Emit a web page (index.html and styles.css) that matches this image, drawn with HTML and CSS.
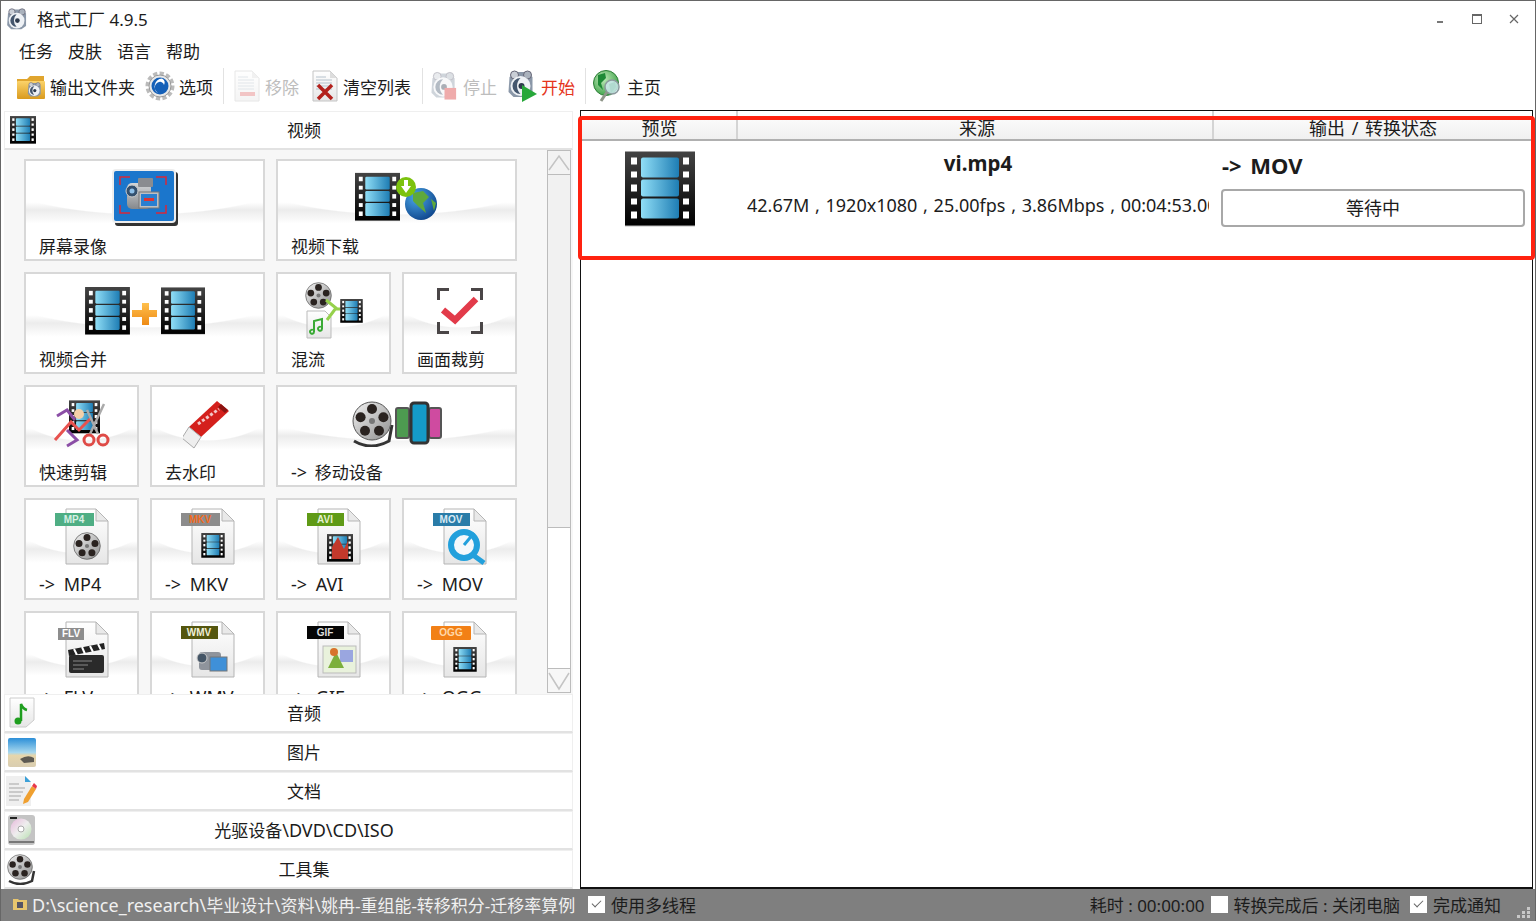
FILE: index.html
```html
<!DOCTYPE html>
<html lang="zh-CN">
  <head>
    <meta charset="utf-8">
    <title>格式工厂 4.9.5</title>
    <link rel="stylesheet" href="styles.css">
  </head>
  <body>
    <!-- shared icon parts -->
    <svg class="defs" width="0" height="0">
      <defs>
        <linearGradient id="gFilm" x1="0" y1="0" x2="0" y2="1"><stop offset="0" stop-color="#444"/><stop offset="1" stop-color="#000"/></linearGradient>
        <linearGradient id="gPane" x1="0" y1="0" x2="1" y2="0"><stop offset="0" stop-color="#90def6"/><stop offset="1" stop-color="#1e7db4"/></linearGradient>
        <linearGradient id="gPage" x1="0" y1="0" x2="0" y2="1"><stop offset="0" stop-color="#fff"/><stop offset="1" stop-color="#e6e6e6"/></linearGradient>
        <linearGradient id="gReel" x1="0" y1="0" x2="1" y2="1"><stop offset="0" stop-color="#f2f2f2"/><stop offset="1" stop-color="#8f8f8f"/></linearGradient>
        <linearGradient id="gFolder" x1="0" y1="0" x2="0" y2="1"><stop offset="0" stop-color="#fbd36a"/><stop offset="1" stop-color="#d99a1e"/></linearGradient>
        <linearGradient id="gPlus" x1="0" y1="0" x2="0" y2="1"><stop offset="0" stop-color="#ffc04d"/><stop offset="1" stop-color="#ee8a14"/></linearGradient>
        <linearGradient id="gCam" x1="0" y1="0" x2="0" y2="1"><stop offset="0" stop-color="#d4d6d8"/><stop offset="1" stop-color="#85888c"/></linearGradient>
        <radialGradient id="gGlobe" cx=".35" cy=".3" r=".8"><stop offset="0" stop-color="#4aa6e8"/><stop offset="1" stop-color="#0b3f86"/></radialGradient>
        <radialGradient id="gHome" cx=".4" cy=".35" r=".75"><stop offset="0" stop-color="#bfeab8"/><stop offset="1" stop-color="#2f9a3c"/></radialGradient>
        <linearGradient id="gSky" x1="0" y1="0" x2="0" y2="1"><stop offset="0" stop-color="#2c8fd8"/><stop offset=".5" stop-color="#a8d8ee"/><stop offset=".6" stop-color="#e6d6ac"/><stop offset="1" stop-color="#d9cdb0"/></linearGradient>
        <linearGradient id="gDisc" x1="0" y1="0" x2="1" y2="1"><stop offset="0" stop-color="#e8b8dc"/><stop offset=".5" stop-color="#eeeeee"/><stop offset="1" stop-color="#b8e0b0"/></linearGradient>

        <symbol id="film" viewBox="0 0 70 75">
          <rect y="1" width="70" height="74" fill="#bbb"/>
          <rect width="70" height="74" fill="url(#gFilm)"/>
          <g fill="#fff">
            <rect x="6" y="6" width="6" height="7"/><rect x="6" y="20" width="6" height="6"/><rect x="6" y="33" width="6" height="7"/><rect x="6" y="47" width="6" height="6"/><rect x="6" y="60" width="6" height="7"/>
            <rect x="58" y="6" width="6" height="7"/><rect x="58" y="20" width="6" height="6"/><rect x="58" y="33" width="6" height="7"/><rect x="58" y="47" width="6" height="6"/><rect x="58" y="60" width="6" height="7"/>
          </g>
          <g fill="url(#gPane)">
            <rect x="16" y="6" width="38" height="20" rx="2"/><rect x="16" y="28" width="38" height="17" rx="2"/><rect x="16" y="47" width="38" height="20" rx="2"/>
          </g>
        </symbol>

        <symbol id="reel" viewBox="0 0 40 40">
          <circle cx="20" cy="20" r="19" fill="url(#gReel)" stroke="#555"/>
          <g fill="#2a2320">
            <circle cx="20" cy="8" r="5"/><circle cx="31.4" cy="16.3" r="5"/><circle cx="27" cy="29.7" r="5"/><circle cx="13" cy="29.7" r="5"/><circle cx="8.6" cy="16.3" r="5"/>
          </g>
          <circle cx="20" cy="20" r="3" fill="#777"/>
        </symbol>

        <symbol id="app" viewBox="2 1 27 28">
          <path d="M4 8 L11 3 H21 L27 8 V24 L21 28 H8 L3 23 Z" fill="#8a97a8"/>
          <circle cx="9" cy="6" r="4" fill="#c9ced6" stroke="#667"/>
          <circle cx="22" cy="6" r="4" fill="#aab2bd" stroke="#667"/>
          <circle cx="15" cy="17" r="10" fill="#eef1f5"/>
          <path d="M15 9 A8 8 0 0 0 15 25 A11 11 0 0 1 15 9 Z" fill="#44566e"/>
          <circle cx="16" cy="17" r="3" fill="#2d3a4d"/>
        </symbol>

        <symbol id="page" viewBox="0 0 60 60">
          <path d="M14 2 H44 L56 14 V57 H14 Z" fill="url(#gPage)" stroke="#b5b5b5"/>
          <path d="M44 2 V14 H56 Z" fill="#e9e9e9" stroke="#b5b5b5"/>
        </symbol>

        <symbol id="lines" viewBox="0 0 26 32">
          <path d="M1 1 H18 L25 8 V31 H1 Z" fill="url(#gPage)" stroke="#c4c4c4"/>
          <path d="M18 1 V8 H25 Z" fill="#ddd"/>
          <path d="M4 7 H14 M4 10 H20 M4 13 H20 M4 16 H20 M4 19 H20" stroke="#b6c2cc"/>
        </symbol>
      </defs>
    </svg>

    <div class="window">
      <div class="titlebar">
        <svg class="title-icon" width="22" height="22"><use href="#app"/></svg>
        <span class="title-text">格式工厂 4.9.5</span>
        <div class="win-btns">
          <svg width="12" height="12" viewBox="0 0 12 12"><rect x="3" y="8" width="6" height="2" fill="#777"/></svg>
          <svg width="12" height="12" viewBox="0 0 12 12"><rect x="1.500" y="1.500" width="9" height="9" fill="none" stroke="#666"/><rect x="1" y="1" width="10" height="2" fill="#666"/></svg>
          <svg width="12" height="12" viewBox="0 0 12 12"><path d="M2 2 L10 10 M10 2 L2 10" stroke="#666" stroke-width="1.200"/></svg>
        </div>
      </div>

      <div class="menubar">
        <span>任务</span><span>皮肤</span><span>语言</span><span>帮助</span>
      </div>

      <div class="toolbar">
        <div class="tool">
          <svg width="30" height="30" viewBox="0 0 30 30">
            <path d="M1 8 H11 L14 5 H28 V27 H1 Z" fill="#e0a52e"/>
            <rect x="1" y="10" width="28" height="18" rx="1" fill="url(#gFolder)"/>
            <use href="#app" x="11" y="11" width="15" height="15"/>
          </svg>
          <span>输出文件夹</span>
        </div>
        <div class="tool">
          <svg width="30" height="32" viewBox="0 0 30 32">
            <circle cx="15" cy="16" r="12" fill="none" stroke="#bbb" stroke-width="5" stroke-dasharray="4 2.200"/>
            <circle cx="15" cy="16" r="11" fill="#e8e8e8" stroke="#999"/>
            <circle cx="15" cy="16" r="8.500" fill="#1560b8"/>
            <path d="M17 8.500 A8 8 0 0 0 13 23 A6 6 0 0 1 14 12 A4 4 0 0 1 19 15 A5 5 0 0 0 17 8.500 Z" fill="#fff"/>
          </svg>
          <span>选项</span>
        </div>
        <i class="sep"></i>
        <div class="tool tool-off tool-doc">
          <svg width="27" height="32" viewBox="0 0 27 32">
            <use href="#lines" x="0" y="0" width="26" height="32"/>
            <rect x="6" y="22" width="15" height="4" fill="#e07070"/>
          </svg>
          <span>移除</span>
        </div>
        <div class="tool tool-doc">
          <svg width="27" height="32" viewBox="0 0 27 32">
            <use href="#lines" x="0" y="0" width="26" height="32"/>
            <path d="M6 15 L20 29 M20 15 L6 29" stroke="#b3211c" stroke-width="3.500"/>
          </svg>
          <span>清空列表</span>
        </div>
        <i class="sep"></i>
        <div class="tool tool-off tool-stop">
          <svg width="29" height="30" viewBox="0 0 30 30">
            <use href="#app" x="0" y="0" width="28" height="28"/>
            <rect x="15" y="17" width="12" height="12" fill="#d83030"/>
          </svg>
          <span>停止</span>
        </div>
        <div class="tool tool-start">
          <svg width="30" height="32" viewBox="0 0 30 32">
            <use href="#app" x="0" y="0" width="28" height="28"/>
            <path d="M15 15 L30 24 L15 32 Z" fill="#27a83a"/>
          </svg>
          <span>开始</span>
        </div>
        <i class="sep"></i>
        <div class="tool tool-home">
          <svg width="33" height="32" viewBox="0 0 33 32">
            <circle cx="14" cy="13" r="12.500" fill="url(#gHome)" stroke="#2b7d35"/>
            <path d="M6 5 L13 3 L14 8 L9 13 L11 20 L6 15 Z M17 14 L23 12 L24 17 L19 23 Z" fill="#1e8a36"/>
            <circle cx="20" cy="17" r="7" fill="#d5ecf6" fill-opacity=".8" stroke="#8c9a9e" stroke-width="1.500"/>
            <path d="M15 22 L9 31" stroke="#8f9689" stroke-width="3"/>
          </svg>
          <span>主页</span>
        </div>
      </div>

      <div class="main">
        <div class="left">
          <div class="acc acc-top">
            <div class="acc-icon"><svg width="26" height="28"><use href="#film"/></svg></div>
            <span class="acc-label">视频</span>
          </div>

          <div class="scroller">
            <div class="tiles">
              <div class="tile wide">
                <div class="tile-icon">
                  <svg width="66" height="58" viewBox="0 0 66 58">
                    <rect x="3" y="3" width="63" height="54" rx="3" fill="#333"/>
                    <rect x="1" y="1" width="62" height="52" rx="3" fill="#1b76cc" stroke="#eee" stroke-width="2"/>
                    <path d="M8 16 V8 H18 M44 8 H54 V16 M8 36 V44 H18 M44 44 H54 V36" fill="none" stroke="#d8283a" stroke-width="1.500"/>
                    <rect x="15" y="14" width="24" height="26" rx="5" fill="url(#gCam)"/>
                    <rect x="26" y="9" width="15" height="9" rx="1" fill="#8a8c90"/>
                    <circle cx="20" cy="22" r="6" fill="#34506e" stroke="#ccc"/>
                    <circle cx="20" cy="22" r="2.500" fill="#8fc0e8"/>
                    <rect x="27" y="23" width="20" height="16" fill="#bcbfc3" stroke="#777"/>
                    <rect x="29" y="25" width="16" height="12" fill="#2a7fd0"/>
                    <rect x="32" y="29" width="10" height="3" fill="#d33"/>
                  </svg>
                </div>
                <span class="tile-label">屏幕录像</span>
              </div>
              <div class="tile wide">
                <div class="tile-icon">
                  <svg width="84" height="54" viewBox="0 0 84 54">
                    <use href="#film" x="0" y="1" width="45" height="50"/>
                    <circle cx="66" cy="33" r="16" fill="url(#gGlobe)"/>
                    <path d="M58 22 L68 20 L74 26 L68 32 L71 42 L64 36 L58 30 Z M76 28 L81 32 L79 40 Z" fill="#5ea83c"/>
                    <circle cx="51" cy="16" r="10" fill="#7cc20e"/>
                    <path d="M49 9 H53 V15 H56 L51 22 L46 15 H49 Z" fill="#fff"/>
                  </svg>
                </div>
                <span class="tile-label">视频下载</span>
              </div>

              <div class="tile wide">
                <div class="tile-icon">
                  <svg width="120" height="48" viewBox="0 0 120 48">
                    <use href="#film" x="0" y="0" width="45" height="48"/>
                    <use href="#film" x="76" y="0" width="44" height="48"/>
                    <path d="M57 16 H64 V23 H72 V30 H64 V38 H57 V30 H47 V23 H57 Z" fill="url(#gPlus)"/>
                  </svg>
                </div>
                <span class="tile-label">视频合并</span>
              </div>
              <div class="tile">
                <div class="tile-icon">
                  <svg width="58" height="58" viewBox="0 0 58 58">
                    <use href="#reel" x="0" y="0" width="27" height="27"/>
                    <path d="M2 29 H20 L26 35 V56 H2 Z" fill="url(#gPage)" stroke="#bbb"/>
                    <path d="M9 50 V39 L17 37 V47 M9 50 a2 2 0 1 1 -1 -2 M17 47 a2 2 0 1 1 -1 -2" fill="none" stroke="#3aaa35" stroke-width="2"/>
                    <path d="M21 18 L31 26 L22 38 M30 27 H36" fill="none" stroke="#96d14c" stroke-width="3"/>
                    <use href="#film" x="35" y="17" width="23" height="24"/>
                  </svg>
                </div>
                <span class="tile-label">混流</span>
              </div>
              <div class="tile">
                <div class="tile-icon">
                  <svg width="46" height="46" viewBox="0 0 46 46">
                    <path d="M1.500 12 V1.500 H12 M34 1.500 H44.500 V12 M1.500 34 V44.500 H12 M34 44.500 H44.500 V34" fill="none" stroke="#4a4647" stroke-width="3"/>
                    <path d="M6 22 L18 32 L39 11" fill="none" stroke="#e23b4a" stroke-width="6.500"/>
                  </svg>
                </div>
                <span class="tile-label">画面裁剪</span>
              </div>

              <div class="tile">
                <div class="tile-icon">
                  <svg width="58" height="48" viewBox="0 0 58 48">
                    <use href="#film" x="16" y="0" width="31" height="34"/>
                    <circle cx="26" cy="14" r="5" fill="#f5cfa8"/>
                    <path d="M4 16 L14 10 L22 20 M14 30 L24 40 L14 46" fill="none" stroke="#8b4ea6" stroke-width="3"/>
                    <path d="M2 40 L18 22 L26 30 L38 18" fill="none" stroke="#e8524f" stroke-width="3"/>
                    <path d="M51 4 L37 34 M34 10 L45 34" stroke="#aaa" stroke-width="2.500"/>
                    <circle cx="36" cy="40" r="5" fill="none" stroke="#df4b47" stroke-width="3"/>
                    <circle cx="50" cy="40" r="5" fill="none" stroke="#df4b47" stroke-width="3"/>
                  </svg>
                </div>
                <span class="tile-label">快速剪辑</span>
              </div>
              <div class="tile">
                <div class="tile-icon">
                  <svg width="50" height="50" viewBox="2 0 50 50">
                    <path d="M36 2 L48 12 L20 38 L8 28 Z" fill="#d4201c"/>
                    <path d="M40 5 L47 11 L44 14 L37 8 Z" fill="#8c1210"/>
                    <path d="M17 25 L38 10" stroke="#f3c8c8" stroke-width="3" stroke-dasharray="3 2"/>
                    <path d="M8 28 L20 38 L13 49 L1 39 Z" fill="#eee" stroke="#aaa"/>
                  </svg>
                </div>
                <span class="tile-label">去水印</span>
              </div>
              <div class="tile wide">
                <div class="tile-icon">
                  <svg width="92" height="46" viewBox="0 0 92 46">
                    <path d="M3 40 Q20 50 38 40 L41 24" fill="none" stroke="#333" stroke-width="3"/>
                    <use href="#reel" x="1" y="0" width="40" height="40"/>
                    <rect x="45" y="7" width="13" height="30" rx="2" fill="#4d9a50" stroke="#555" stroke-width="2"/>
                    <rect x="78" y="7" width="12" height="30" rx="2" fill="#cf4ba0" stroke="#555" stroke-width="2"/>
                    <rect x="60" y="2" width="17" height="40" rx="3" fill="#159bc8" stroke="#333" stroke-width="3"/>
                  </svg>
                </div>
                <span class="tile-label"><span class="latin">-&gt; </span>移动设备</span>
              </div>

              <div class="tile">
                <div class="tile-icon">
                  <svg class="tag" width="60" height="60" viewBox="0 0 60 60">
                    <use href="#page" width="60" height="60"/>
                    <use href="#reel" x="21" y="25" width="28" height="28"/>
                    <rect x="3" y="6" width="39" height="13" fill="#4fae84"/>
                    <text x="22" y="16" fill="#d8f0e4">MP4</text>
                  </svg>
                </div>
                <span class="tile-label latin">-&gt; MP4</span>
              </div>
              <div class="tile">
                <div class="tile-icon">
                  <svg class="tag" width="60" height="60" viewBox="0 0 60 60">
                    <use href="#page" width="60" height="60"/>
                    <use href="#film" x="23" y="26" width="24" height="25"/>
                    <rect x="3" y="6" width="39" height="13" fill="#8c8c8c"/>
                    <text x="22" y="16" fill="#f26a1c">MKV</text>
                  </svg>
                </div>
                <span class="tile-label latin">-&gt; MKV</span>
              </div>
              <div class="tile">
                <div class="tile-icon">
                  <svg class="tag" width="60" height="60" viewBox="0 0 60 60">
                    <use href="#page" width="60" height="60"/>
                    <use href="#film" x="23" y="26" width="26" height="30"/>
                    <path d="M28 40 L34 30 L40 42 L44 34 L44 52 L28 52 Z" fill="#c2392c"/>
                    <rect x="3" y="6" width="37" height="13" fill="#5f9a16"/>
                    <text x="21" y="16" fill="#e4f0d0">AVI</text>
                  </svg>
                </div>
                <span class="tile-label latin">-&gt; AVI</span>
              </div>
              <div class="tile">
                <div class="tile-icon">
                  <svg class="tag" width="60" height="60" viewBox="0 0 60 60">
                    <use href="#page" width="60" height="60"/>
                    <circle cx="34" cy="38" r="13" fill="#f4f8fb" stroke="#22a0dc" stroke-width="6"/>
                    <path d="M43 48 L54 56" stroke="#22a0dc" stroke-width="5"/>
                    <path d="M34 38 L44 26" stroke="#22a0dc" stroke-width="3"/>
                    <rect x="3" y="6" width="37" height="13" fill="#2a7ca8"/>
                    <text x="21" y="16" fill="#d8eaf4">MOV</text>
                  </svg>
                </div>
                <span class="tile-label latin">-&gt; MOV</span>
              </div>

              <div class="tile">
                <div class="tile-icon">
                  <svg class="tag" width="60" height="60" viewBox="0 0 60 60">
                    <use href="#page" width="60" height="60"/>
                    <path d="M16 30 L52 23 L53 29 L17 36 Z" fill="#222"/>
                    <path d="M22 29 L25 35 M30 27 L33 34 M38 26 L41 32 M46 24 L49 30" stroke="#fff" stroke-width="2"/>
                    <rect x="17" y="35" width="35" height="18" rx="2" fill="#2a2a2a"/>
                    <path d="M21 41 H40 M21 45 H36 M21 49 H32" stroke="#888"/>
                    <rect x="6" y="8" width="26" height="12" fill="#8d8d8d"/>
                    <text x="19" y="17" fill="#fff">FLV</text>
                  </svg>
                </div>
                <span class="tile-label latin">-&gt; FLV</span>
              </div>
              <div class="tile">
                <div class="tile-icon">
                  <svg class="tag" width="60" height="60" viewBox="0 0 60 60">
                    <use href="#page" width="60" height="60"/>
                    <rect x="21" y="32" width="22" height="18" rx="3" fill="#8f949c"/>
                    <circle cx="24" cy="38" r="5" fill="#456" stroke="#ccc"/>
                    <rect x="32" y="37" width="17" height="14" fill="#3f90d8" stroke="#777"/>
                    <rect x="3" y="6" width="37" height="13" fill="#54560e"/>
                    <text x="21" y="16" fill="#f0f0d8">WMV</text>
                  </svg>
                </div>
                <span class="tile-label latin">-&gt; WMV</span>
              </div>
              <div class="tile">
                <div class="tile-icon">
                  <svg class="tag" width="60" height="60" viewBox="0 0 60 60">
                    <use href="#page" width="60" height="60"/>
                    <rect x="19" y="26" width="33" height="27" fill="#e9f2dc" stroke="#bbb"/>
                    <rect x="36" y="30" width="13" height="12" fill="#9aa6e0"/>
                    <path d="M24 48 L32 32 L40 48 Z" fill="#7caf3c"/>
                    <circle cx="30" cy="32" r="4" fill="#d8742c"/>
                    <rect x="3" y="6" width="37" height="13" fill="#050505"/>
                    <text x="21" y="16" fill="#ddd">GIF</text>
                  </svg>
                </div>
                <span class="tile-label latin">-&gt; GIF</span>
              </div>
              <div class="tile">
                <div class="tile-icon">
                  <svg class="tag" width="60" height="60" viewBox="0 0 60 60">
                    <use href="#page" width="60" height="60"/>
                    <use href="#film" x="23" y="27" width="24" height="25"/>
                    <rect x="1" y="6" width="40" height="14" rx="1" fill="#f28016"/>
                    <text x="21" y="16" fill="#ffd8a8">OGG</text>
                  </svg>
                </div>
                <span class="tile-label latin">-&gt; OGG</span>
              </div>
            </div>

            <div class="scrollbar">
              <div class="sb-btn">
                <svg width="22" height="23" viewBox="0 0 22 23"><path d="M1 19 L11 5 L21 19" fill="none" stroke="#c4c4c4" stroke-width="1.500"/></svg>
              </div>
              <div class="sb-thumb"></div>
              <div class="sb-track"></div>
              <div class="sb-btn sb-btn-down">
                <svg width="22" height="23" viewBox="0 0 22 23"><path d="M1 4 L11 20 L21 4" fill="none" stroke="#c4c4c4" stroke-width="1.500"/></svg>
              </div>
            </div>
          </div>

          <div class="acc">
            <div class="acc-icon">
              <svg width="30" height="32" viewBox="0 0 30 32">
                <path d="M4 1 H28 V23 L20 30 H4 Z" fill="url(#gPage)" stroke="#ccc"/>
                <path d="M15 24 V7 Q17 12 21 13" fill="none" stroke="#1f9e1f" stroke-width="2.500"/>
                <circle cx="12" cy="24" r="3.500" fill="#1f9e1f"/>
              </svg>
            </div>
            <span class="acc-label">音频</span>
          </div>
          <div class="acc">
            <div class="acc-icon">
              <svg width="30" height="30" viewBox="0 0 30 30">
                <rect x="2" y="1" width="28" height="29" rx="2" fill="url(#gSky)"/>
                <path d="M14 22 Q22 17 28 21 L28 25 L18 26 Z" fill="#5d5a52"/>
              </svg>
            </div>
            <span class="acc-label">图片</span>
          </div>
          <div class="acc">
            <div class="acc-icon">
              <svg width="32" height="32" viewBox="0 0 32 32">
                <path d="M1 1 H20 L26 7 V31 H1 Z" fill="#efefef"/>
                <path d="M20 1 L26 7 H20 Z" fill="#3ba0d8"/>
                <path d="M4 9 H14 M4 13 H20 M4 17 H18 M4 21 H16 M4 25 H14" stroke="#a5a5a5"/>
                <path d="M19 24 L27 11 L31 14 L23 27 L18 29 Z" fill="#f0a030"/>
                <path d="M27 11 L29 8 L32 11 L31 14 Z" fill="#e8384a"/>
              </svg>
            </div>
            <span class="acc-label">文档</span>
          </div>
          <div class="acc">
            <div class="acc-icon">
              <svg width="30" height="32" viewBox="0 0 30 32">
                <rect x="2" y="1" width="27" height="30" rx="3" fill="#c4c4c4"/>
                <rect x="4" y="3" width="7" height="2" fill="#222"/>
                <circle cx="15" cy="15" r="10.500" fill="url(#gDisc)"/>
                <circle cx="15" cy="15" r="3" fill="#fff" stroke="#aaa"/>
                <rect x="3" y="27" width="25" height="2" fill="#777"/>
              </svg>
            </div>
            <span class="acc-label">光驱设备<span class="latin">\DVD\CD\ISO</span></span>
          </div>
          <div class="acc">
            <div class="acc-icon">
              <svg width="30" height="32" viewBox="0 0 30 32">
                <path d="M3 28 Q14 34 26 28 L28 18" fill="none" stroke="#333" stroke-width="2.500"/>
                <use href="#reel" x="1" y="1" width="26" height="26"/>
              </svg>
            </div>
            <span class="acc-label">工具集</span>
          </div>
        </div>

        <div class="right">
          <div class="thead">
            <div class="th th-preview">预览</div>
            <div class="th th-source">来源</div>
            <div class="th th-output">输出 / 转换状态</div>
          </div>
          <div class="row">
            <div class="cell-preview"><svg width="70" height="76"><use href="#film"/></svg></div>
            <div class="cell-source">
              <div class="file-name">vi.mp4</div>
              <div class="file-info">42.67M , 1920x1080 , 25.00fps , 3.86Mbps , 00:04:53.00</div>
            </div>
            <div class="cell-output">
              <div class="out-format">-&gt; MOV</div>
              <div class="out-state">等待中</div>
            </div>
          </div>
          <div class="highlight"></div>
        </div>
      </div>

      <div class="statusbar">
        <svg class="path-icon" width="16" height="14" viewBox="0 0 16 14">
          <path d="M1 2 H6 L7 3 H15 V13 H1 Z" fill="#e8c66e"/>
          <rect x="5" y="5" width="6" height="6" fill="#556"/>
        </svg>
        <span class="path-text"><span class="latin">D:\science_research\</span>毕业设计\资料\姚冉-重组能-转移积分-迁移率算例</span>
        <label class="check check-multi"><i class="box on"></i>使用多线程</label>
        <span class="elapsed">耗时 : 00:00:00</span>
        <label class="check"><i class="box"></i>转换完成后 : 关闭电脑</label>
        <label class="check check-notify"><i class="box on"></i>完成通知</label>
        <svg class="grip" width="14" height="14" viewBox="0 0 14 14" fill="#c8c8c8">
          <rect x="10" y="2" width="3" height="3"/><rect x="5" y="6" width="3" height="3"/><rect x="10" y="6" width="3" height="3"/><rect x="0" y="10" width="3" height="3"/><rect x="5" y="10" width="3" height="3"/><rect x="10" y="10" width="3" height="3"/>
        </svg>
      </div>
    </div>
  </body>
</html>
```

FILE: styles.css
```css
html, body{
  margin: 0;
  padding: 0;
}

body{
  font-family: "Noto Sans", "Noto Sans CJK SC", sans-serif;
  font-size: 17px;
  color: #1c1c1c;
  background: #fff;
}

/* Latin text runs a pixel larger than the CJK text in the original */
.latin{
  font-size: 18px;
}

.defs{
  position: absolute;
}

svg{
  display: block;
  flex: none;
}

.window{
  display: flex;
  flex-direction: column;
  box-sizing: border-box;
  width: 1536px;
  height: 921px;
  overflow: hidden;
  border: 1px solid #666;
  border-bottom: 0;
}

/* Title bar */
.titlebar{
  display: flex;
  align-items: center;
  height: 37px;
  padding-left: 5px;
  padding-bottom: 2px;
  box-sizing: border-box;
}

.title-text{
  margin-left: 9px;
}

.win-btns{
  display: flex;
  gap: 25px;
  margin-left: auto;
  margin-right: 15px;
}

/* Menu */
.menubar{
  display: flex;
  gap: 15px;
  height: 30px;
  padding-left: 18px;
  line-height: 28px;
}

/* Toolbar */
.toolbar{
  display: flex;
  align-items: center;
  box-sizing: border-box;
  height: 42px;
  padding-left: 15px;
  padding-bottom: 6px;
}

.tool{
  display: flex;
  align-items: center;
  gap: 4px;
  margin-right: 10px;
}

.tool-doc{
  margin-right: 13px;
}

.tool-doc + .sep{
  margin-left: -2px;
}

.tool-stop{
  margin-left: -3px;
}

.tool-off span{
  color: #bdbdbd;
}

.tool-off svg{
  opacity: .4;
}

.tool-start span{
  color: #e5341b;
}

.tool-home{
  gap: 2px;
  margin-left: -4px;
}

.sep{
  width: 1px;
  height: 36px;
  margin-right: 10px;
  background: #e2e2e2;
}

/* Main area */
.main{
  display: flex;
  flex: 1;
  min-height: 0;
}

.left{
  display: flex;
  flex-direction: column;
  flex: none;
  width: 569px;
  margin-left: 3px;
}

.acc{
  display: flex;
  align-items: center;
  flex: none;
  box-sizing: border-box;
  height: 39px;
  padding-bottom: 1px;
  border: 1px solid #efefef;
  border-bottom: 2px solid #e2e2e2;
  background: #fff;
}

.acc-top{
  margin-top: 1px;
}

.acc-top svg{
  margin-left: 3px;
}

.acc-icon{
  display: flex;
  justify-content: center;
  width: 30px;
  margin-left: 1px;
}

.acc-label{
  flex: 1;
  text-align: center;
}

.scroller{
  display: flex;
  flex: none;
  height: 544px;
  background: #f7f7f7;
  overflow: hidden;
}

.tiles{
  display: grid;
  grid-template-columns: repeat(4, 115px);
  grid-auto-rows: 102px;
  gap: 11px;
  align-content: start;
  width: 543px;
  box-sizing: border-box;
  padding: 9px 0 0 20px;
}

.tile{
  display: flex;
  flex-direction: column;
  box-sizing: border-box;
  border: 2px solid #d8d8d8;
  background:
    radial-gradient(ellipse 75% 58px at 50% -4px, #fff 98%, rgba(255,255,255,0) 100%),
    linear-gradient(#fff 42%, #ececec 50%, #fff 64%);
}

.wide{
  grid-column: span 2;
}

.tile-icon{
  display: flex;
  align-items: center;
  justify-content: center;
  height: 74px;
}

.tile-label{
  padding-left: 13px;
  line-height: 24px;
  word-spacing: 3px;
}

.tile-label.latin{
  margin-top: -2px;
  word-spacing: 4px;
}

.tag text{
  font-family: "Liberation Sans", sans-serif;
  font-size: 10px;
  font-weight: bold;
  text-anchor: middle;
}

/* Scrollbar */
.scrollbar{
  display: flex;
  flex-direction: column;
  flex: none;
  box-sizing: border-box;
  width: 24px;
  height: 543px;
  border: 1px solid #bcbcbc;
  background: #fff;
}

.sb-btn{
  height: 23px;
  background: #f3f3f3;
  border-bottom: 1px solid #bcbcbc;
}

.sb-btn-down{
  border-top: 1px solid #bcbcbc;
  border-bottom: 0;
  background: #f7f7f7;
}

.sb-thumb{
  height: 352px;
  background: #f1f1f1;
  border-bottom: 1px solid #bcbcbc;
}

.sb-track{
  flex: 1;
}

/* Conversion list */
.right{
  position: relative;
  flex: none;
  box-sizing: border-box;
  width: 953px;
  height: 779px;
  margin-left: 7px;
  border: 1px solid #111;
  border-bottom-width: 2px;
}

.thead{
  display: flex;
  height: 30px;
  box-sizing: border-box;
  border-bottom: 2px solid #b0b0b0;
  background: linear-gradient(#fff, #f0f0f0);
  font-size: 18px;
  line-height: 35px;
  word-spacing: 2px;
  overflow: hidden;
}

.th{
  box-sizing: border-box;
  text-align: center;
  border-right: 2px solid #d4d4d4;
}

.th-preview{
  width: 157px;
  padding-left: 2px;
}

.th-source{
  width: 476px;
  padding-left: 4px;
}

.th-output{
  flex: 1;
  border-right: 0;
}

.row{
  display: flex;
}

.cell-preview{
  display: flex;
  justify-content: center;
  width: 157px;
  padding-top: 10px;
}

.cell-source{
  width: 462px;
  margin-left: 9px;
  margin-right: 5px;
  overflow: hidden;
  white-space: nowrap;
  font-size: 18px;
}

.file-name{
  font-size: 20.500px;
  font-weight: bold;
  text-align: center;
  padding-top: 9px;
  line-height: 26px;
}

.file-info{
  margin-top: 16px;
  line-height: 26px;
  word-spacing: 1px;
}

.cell-output{
  flex: 1;
  padding: 11px 7px 0 7px;
}

.out-format{
  margin-left: 1px;
  font-size: 22px;
  font-weight: bold;
  line-height: 26px;
  word-spacing: 3px;
}

.out-state{
  box-sizing: border-box;
  height: 38px;
  margin-top: 11px;
  border: 2px solid #a8a8a8;
  border-radius: 4px;
  font-size: 18px;
  line-height: 34px;
  text-align: center;
}

.highlight{
  position: absolute;
  top: 5px;
  left: -3px;
  right: -3px;
  height: 144px;
  box-sizing: border-box;
  border: 4px solid #ff2210;
  border-radius: 4px;
}

/* Status bar */
.statusbar{
  display: flex;
  align-items: center;
  flex: none;
  box-sizing: border-box;
  height: 32px;
  padding-bottom: 2px;
  background: #7f7f7f;
}

.path-icon{
  margin-left: 11px;
  margin-right: 4px;
}

.path-text{
  color: #f0f0f0;
  white-space: nowrap;
  width: 556px;
}

.check{
  display: flex;
  align-items: center;
  gap: 6px;
}

.check-multi{
  margin-right: auto;
}

.check-notify{
  margin-left: 10px;
}

.elapsed{
  margin-right: 6px;
}

.box{
  display: block;
  position: relative;
  width: 17px;
  height: 17px;
  background: #fff;
}

.box.on::after{
  content: '';
  position: absolute;
  left: 4px;
  top: 4px;
  width: 8px;
  height: 4px;
  border-left: 1px solid #666;
  border-bottom: 1px solid #666;
  transform: rotate(-45deg);
}

.grip{
  margin-left: 16px;
  margin-right: 4px;
  align-self: flex-end;
}
```
